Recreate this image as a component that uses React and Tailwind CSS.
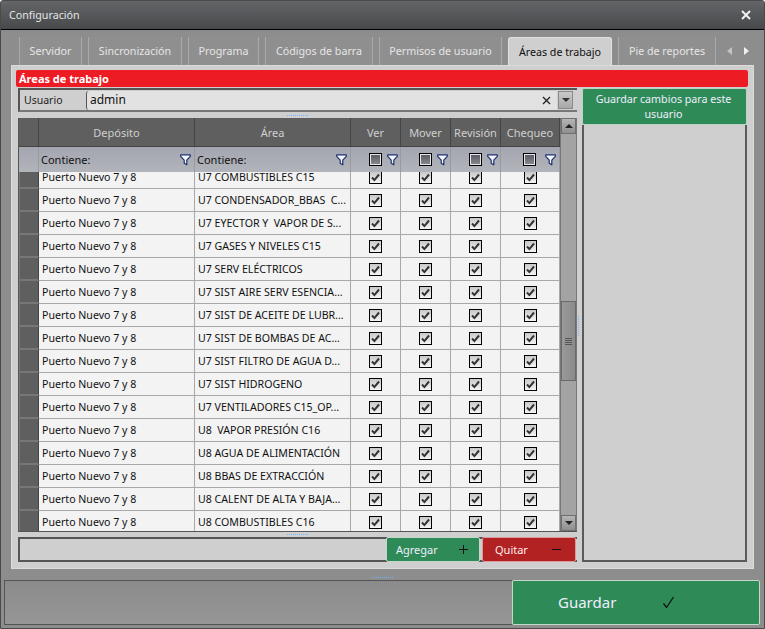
import React from "react";

const tabs = [
  { label: "Servidor", w: "w-[63px]" },
  { label: "Sincronización", w: "w-[94px]" },
  { label: "Programa", w: "w-[71px]" },
  { label: "Códigos de barra", w: "w-[108px]" },
  { label: "Permisos de usuario", w: "w-[123px]" },
  { label: "Áreas de trabajo", w: "w-[104px]", active: true },
  { label: "Pie de reportes", w: "w-[98px]" },
];

const areas = [
  "U7 COMBUSTIBLES C15",
  "U7 CONDENSADOR_BBAS  C...",
  "U7 EYECTOR Y  VAPOR DE S...",
  "U7 GASES Y NIVELES C15",
  "U7 SERV ELÉCTRICOS",
  "U7 SIST AIRE SERV ESENCIA...",
  "U7 SIST DE ACEITE DE LUBR...",
  "U7 SIST DE BOMBAS DE AC...",
  "U7 SIST FILTRO DE AGUA D...",
  "U7 SIST HIDROGENO",
  "U7 VENTILADORES C15_OP...",
  "U8  VAPOR PRESIÓN C16",
  "U8 AGUA DE ALIMENTACIÓN",
  "U8 BBAS DE EXTRACCIÓN",
  "U8 CALENT DE ALTA Y BAJA...",
  "U8 COMBUSTIBLES C16",
];

const gridCols = "grid grid-cols-[20px_156px_156px_50px_50px_50px_59px]";

const Funnel = () => (
  <svg width="11" height="12" viewBox="0 0 11 12" className="shrink-0">
    <path d="M0.7 0.8h9.6v1.6L6.8 6.2v4.6L4.2 9.3V6.2L0.7 2.4z" fill="#f4f6fb" stroke="#1c2f6e" strokeWidth="1.2" strokeLinejoin="round" />
  </svg>
);

const Check = () => (
  <div className="w-[13px] h-[13px] border border-black bg-gradient-to-b from-[#c9c9c9] to-[#f4f4f4] flex items-center justify-center">
    <svg width="9" height="9" viewBox="0 0 9 9">
      <path d="M1 4.5l2.4 2.6L8 1.5" fill="none" stroke="#333" strokeWidth="2" />
    </svg>
  </div>
);

const HeaderCheck = () => (
  <div className="w-[13px] h-[13px] border border-black bg-[#e6e6ea] p-px">
    <div className="w-full h-full bg-gradient-to-b from-[#5c5c66] to-[#85858f]" />
  </div>
);

const Grip = ({ className }) => (
  <div className={`border-t border-dotted border-[#6db6ff] ${className}`} />
);

const HeaderCell = ({ children }) => (
  <div className="h-[29px] flex items-center justify-center border-r border-b border-[#444] text-[#cfcfcf]">
    {children}
  </div>
);

const ContainsCell = () => (
  <div className="h-[25px] flex items-center justify-between pl-[2px] pr-[3px] border-r border-[#989aa2] text-[#111]">
    <span>Contiene:</span>
    <Funnel />
  </div>
);

const CheckFilterCell = ({ wide }) => (
  <div className={`h-[25px] flex items-center border-r border-[#989aa2] ${wide ? "pl-[22px] gap-[9px]" : "pl-[18px] gap-[5px]"}`}>
    <HeaderCheck />
    <Funnel />
  </div>
);

const Row = ({ area }) => (
  <div className={`${gridCols} h-[23px] border-b border-[#a8a8a8] text-[#111] text-[10.6px]`}>
    <div className="bg-[#5f5f5f] border-l border-[#777] border-r border-r-[#444] border-b-2 border-b-[#777] -mb-px" />
    <div className="bg-[#f3f3f3] border-r border-[#a8a8a8] pl-[3px] flex items-center whitespace-pre overflow-hidden">Puerto Nuevo 7 y 8</div>
    <div className="bg-[#f3f3f3] border-r border-[#a8a8a8] pl-[3px] flex items-center whitespace-pre overflow-hidden">{area}</div>
    {[0, 1, 2, 3].map((i) => (
      <div key={i} className="bg-[#f3f3f3] border-r border-[#a8a8a8] flex items-center justify-center">
        <Check />
      </div>
    ))}
  </div>
);

const Scrollbar = () => (
  <div className="w-[17px] flex flex-col bg-[#a3a3a3] border-x border-[#777]">
    <div className="h-[16px] bg-gradient-to-b from-[#b5b5b5] to-[#8f8f8f] border border-[#6f6f6f] flex items-center justify-center">
      <div className="w-0 h-0 border-x-[4px] border-x-transparent border-b-[4px] border-b-[#222]" />
    </div>
    <div className="h-[167px]" />
    <div className="h-[80px] bg-gradient-to-r from-[#9a9a9a] to-[#8a8a8a] border border-[#6a6a6a] flex flex-col items-center justify-center gap-[1px]">
      <div className="w-[7px] h-px bg-[#555]" />
      <div className="w-[7px] h-px bg-[#555]" />
      <div className="w-[7px] h-px bg-[#555]" />
      <div className="w-[7px] h-px bg-[#555]" />
    </div>
    <div className="flex-1" />
    <div className="h-[16px] bg-gradient-to-b from-[#b5b5b5] to-[#8f8f8f] border border-[#6f6f6f] flex items-center justify-center">
      <div className="w-0 h-0 border-x-[4px] border-x-transparent border-t-[4px] border-t-[#222]" />
    </div>
  </div>
);

export default function App() {
  return (
    <div className="w-[765px] h-[629px] flex flex-col overflow-hidden bg-[#8d8d8d] border border-[#4a4a4a] rounded-t-[3px] font-['Noto_Sans','Open_Sans',sans-serif] text-[11px] leading-none">
      {/* title */}
      <div className="h-[29px] shrink-0 flex items-center justify-between pl-[8px] pr-[13px] bg-gradient-to-b from-[#646568] to-[#48494b] border-b border-black text-[#e4e4e4] text-[10.7px]">
        <span>Configuración</span>
        <svg width="10" height="10" viewBox="0 0 10 10">
          <path d="M1 1l8 8M9 1l-8 8" stroke="#f2f2f2" strokeWidth="2" />
        </svg>
      </div>

      {/* tabs */}
      <div className="h-[28px] mt-[7px] shrink-0 flex items-stretch gap-[6px] pl-[18px] text-[10.7px]">
        {tabs.map((t) => (
          <div
            key={t.label}
            className={`${t.w} shrink-0 flex items-center justify-center border-x whitespace-nowrap ${
              t.active
                ? "bg-[#cfcfcf] border-[#e2e2e2] border-t rounded-t-[3px] text-[#111] -mb-px"
                : "bg-[#8f8f8f] border-[#a9a9a9] text-[#e6e6e6]"
            }`}
          >
            {t.label}
          </div>
        ))}
        <div className="flex items-center gap-[12px] pl-[5px]">
          <div className="w-0 h-0 border-y-[4px] border-y-transparent border-r-[5px] border-r-[#c4c4c4]" />
          <div className="w-0 h-0 border-y-[4px] border-y-transparent border-l-[5px] border-l-[#f0f0f0]" />
        </div>
      </div>

      {/* panel */}
      <div className="w-[743px] h-[504px] ml-[10px] shrink-0 bg-[#cfcfcf] border border-[#dcdcdc] pt-[4px] pl-[4px] pr-[5px] pb-[6px] flex flex-col">
        <div className="h-[17px] shrink-0 bg-[#ed1c24] rounded-[2px] text-white font-bold flex items-center pl-[3px]">
          Áreas de trabajo
        </div>

        <div className="flex-1 flex mt-[1px] min-h-0">
          {/* left column */}
          <div className="w-[559px] ml-[2px] shrink-0 flex flex-col">
            <div className="h-[24px] shrink-0 flex items-center border-t-2 border-l-2 border-b-2 border-[#555] border-b-[#777] bg-[#cfcfcf] pr-[4px]">
              <span className="w-[66px] pl-[4px] text-[#222] text-[10.5px]">Usuario</span>
              <div className="flex-1 h-[19px] flex items-center justify-between bg-[#e2e2e2] border-l border-[#555] rounded-l-[3px] px-[3px] text-[#111] text-[12px]">
                <span>admin</span>
                <svg width="9" height="9" viewBox="0 0 9 9" className="mr-[3px]">
                  <path d="M1 1l7 7M8 1l-7 7" stroke="#222" strokeWidth="1.3" />
                </svg>
              </div>
              <div className="w-[15px] h-[18px] ml-px bg-gradient-to-b from-[#c9c9c9] to-[#a8a8a8] border border-[#8a8a8a] flex items-center justify-center">
                <div className="w-0 h-0 border-x-[4px] border-x-transparent border-t-[4px] border-t-[#333]" />
              </div>
            </div>
            <div className="h-[6px] shrink-0 flex items-center justify-center">
              <Grip className="w-[21px]" />
            </div>

            {/* table */}
            <div className="h-[414px] shrink-0 flex bg-[#f3f3f3] border-l border-b border-[#555]">
              <div className="flex-1 flex flex-col min-w-0">
                <div className={`${gridCols} bg-[#5f5f5f] shrink-0`}>
                  <HeaderCell />
                  <HeaderCell>Depósito</HeaderCell>
                  <HeaderCell>Área</HeaderCell>
                  <HeaderCell>Ver</HeaderCell>
                  <HeaderCell>Mover</HeaderCell>
                  <HeaderCell>Revisión</HeaderCell>
                  <HeaderCell>Chequeo</HeaderCell>
                </div>
                <div className={`${gridCols} bg-gradient-to-b from-[#a3a6af] to-[#b2b4bb] shrink-0`}>
                  <div className="border-r border-[#989aa2]" />
                  <ContainsCell />
                  <ContainsCell />
                  <CheckFilterCell />
                  <CheckFilterCell />
                  <CheckFilterCell />
                  <CheckFilterCell wide />
                </div>
                <div className="flex-1 overflow-hidden min-h-0">
                  <div className="-mt-[6px]">
                    {areas.map((a) => (
                      <Row key={a} area={a} />
                    ))}
                  </div>
                </div>
              </div>
              <Scrollbar />
            </div>
            <div className="h-[5px] shrink-0 flex items-center justify-center">
              <Grip className="w-[21px]" />
            </div>

            {/* bottom actions */}
            <div className="h-[25px] shrink-0 flex justify-end gap-[2px] bg-[#cfcfcf] border-2 border-r-0 border-[#555] pr-px">
              <div className="w-[94px] -my-[2px] flex items-center justify-between pl-[9px] pr-[10px] bg-[#2e8b57] border border-[#c3d8cb] rounded-[2px] text-[#eef]">
                <span>Agregar</span>
                <svg width="11" height="11" viewBox="0 0 11 11">
                  <path d="M5.5 1v9M1 5.5h9" stroke="#111" strokeWidth="1" />
                </svg>
              </div>
              <div className="w-[94px] -my-[2px] flex items-center justify-between pl-[12px] pr-[13px] bg-[#b22222] border border-[#d99] rounded-[2px] text-[#fee]">
                <span>Quitar</span>
                <svg width="11" height="3" viewBox="0 0 11 3">
                  <path d="M1 1.5h9" stroke="#111" strokeWidth="1" />
                </svg>
              </div>
            </div>
          </div>

          {/* splitter */}
          <div className="w-[5px] shrink-0 flex items-center pl-px">
            <div className="h-[21px] border-l border-dotted border-[#6db6ff]" />
          </div>

          {/* right column */}
          <div className="w-[165px] shrink-0 flex flex-col">
            <div className="h-[37px] shrink-0 bg-[#2e8b57] border border-[#bcd3c4] rounded-[2px] flex items-center justify-center text-center text-[#eef] text-[10.7px] leading-[15px] pl-[6px] pr-[8px] pt-[1px]">
              Guardar cambios para este usuario
            </div>
            <div className="flex-1 bg-[#cfcfcf] border-2 border-t-0 border-[#5a5a5a]" />
          </div>
        </div>
      </div>

      {/* footer grip */}
      <div className="h-[11px] shrink-0 flex items-end justify-center pb-[2px]">
        <Grip className="w-[21px]" />
      </div>

      {/* footer */}
      <div className="h-[45px] ml-[3px] mr-[4px] shrink-0 flex">
        <div className="flex-1 bg-gradient-to-b from-[#8b8b8b] to-[#969696] border border-r-0 border-[#555]" />
        <div className="w-[248px] bg-[#2e8b57] border border-[#c3d8cb] rounded-[2px] flex items-center pl-[45px] gap-[46px] text-[#eef] text-[15px]">
          <span>Guardar</span>
          <svg width="13" height="13" viewBox="0 0 13 13">
            <path d="M1.5 7.5l3 4L11.5 1" fill="none" stroke="#111" strokeWidth="1.3" />
          </svg>
        </div>
      </div>
    </div>
  );
}
